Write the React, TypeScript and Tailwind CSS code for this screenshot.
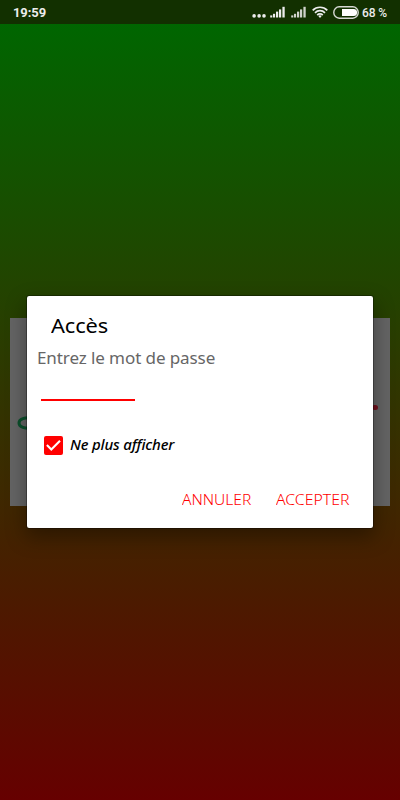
function SignalBars({ className }: { className?: string }) {
  return (
    <svg viewBox="0 0 16 12" className={className} fill="currentColor">
      <rect x="0.2" y="9.4" width="2.1" height="2.1" />
      <rect x="3" y="7.8" width="2.1" height="3.7" />
      <rect x="6" y="5.6" width="2.2" height="5.9" />
      <rect x="9" y="3.4" width="2.2" height="8.1" />
      <rect x="12.4" y="0.8" width="2.3" height="10.7" />
    </svg>
  );
}

function WifiIcon() {
  return (
    <svg viewBox="0 0 16 12" className="ml-[5px] h-3 w-4" fill="none" stroke="currentColor" strokeWidth="1.7">
      <path d="M0.7 4.3a10.3 10.3 0 0 1 14.6 0" />
      <path d="M3 6.8a7 7 0 0 1 10 0" />
      <path d="M5.2 9.1a4 4 0 0 1 5.6 0" />
      <path d="M6.3 10.1 8 11.9l1.7-1.8a2.4 2.4 0 0 0-3.4 0z" fill="currentColor" stroke="none" />
    </svg>
  );
}

function StatusBar() {
  return (
    <header className="flex h-6 items-center bg-[#123000] px-[13px] font-['Roboto',sans-serif] text-[#ececec]">
      <time className="pt-px text-[13px] font-bold leading-6 tracking-[-0.1px]">19:59</time>
      <div className="ml-auto flex items-center">
        <svg viewBox="0 0 14 4" className="mt-[7px] h-1 w-3.5" fill="currentColor">
          <circle cx="2.1" cy="1.9" r="1.8" />
          <circle cx="7.1" cy="1.9" r="1.8" />
          <circle cx="12" cy="1.9" r="1.8" />
        </svg>
        <SignalBars className="ml-1 h-3 w-4" />
        <SignalBars className="ml-[5px] h-3 w-4 text-[#cfd3cb]" />
        <WifiIcon />
        <svg viewBox="0 0 26 13" className="ml-[5px] h-[13px] w-[26px]">
          <rect x="0.8" y="0.8" width="24.4" height="11.4" rx="5.4" fill="none" stroke="#d6d8d3" strokeWidth="1.4" />
          <path d="M9 3h11.6a3.5 3.5 0 0 1 0 7H9z" fill="#fff" />
        </svg>
        <span className="ml-[3px] w-[25px] whitespace-nowrap pt-px text-xs font-medium leading-6 tracking-[-0.1px]">68 %</span>
      </div>
    </header>
  );
}

function AccessDialog() {
  return (
    <div
      role="dialog"
      className="absolute left-[26px] top-[271px] flex h-[234px] w-[348px] flex-col rounded-[3px] border border-black/30 bg-white bg-clip-padding font-['Noto_Sans','Open_Sans',sans-serif] shadow-[0_8px_20px_rgba(0,0,0,0.35)]"
    >
      <h2 className="ml-6 mt-4 h-7 origin-left scale-x-[1.09] whitespace-nowrap text-[20px] leading-7 tracking-[-0.1px] text-black">
        Accès
      </h2>
      <p className="ml-[10px] mt-1.5 h-6 origin-left scale-x-[1.1] whitespace-nowrap text-[15.5px] leading-6 tracking-[-0.1px] text-[#666]">
        Entrez le mot de passe
      </p>
      <div className="ml-3.5 mt-[29px] h-0.5 w-[94px] bg-[#ff0000]" />
      <label className="ml-[17px] mt-8 flex h-6 items-center">
        <span className="flex size-[19px] items-center justify-center rounded-[2px] bg-[#ff0000]">
          <svg viewBox="0 0 19 19" className="size-[19px]" fill="none" stroke="#fff" strokeWidth="2.1">
            <path d="M2.9 9.1 7.3 13.5 16 4.8" />
          </svg>
        </span>
        <span className="ml-[7px] origin-left scale-x-[1.07] whitespace-nowrap text-[14px] font-medium italic leading-6 tracking-[-0.15px] text-black">
          Ne plus afficher
        </span>
      </label>
      <div className="mr-[23px] mt-[31px] flex h-6 justify-end gap-6 text-[14px] leading-6 text-[#ff0000]">
        <button className="w-[70px] origin-left scale-x-[1.11] whitespace-nowrap text-left font-light">ANNULER</button>
        <button className="w-[74px] origin-left scale-x-[1.13] whitespace-nowrap text-left font-light">ACCEPTER</button>
      </div>
    </div>
  );
}

export default function App() {
  return (
    <div className="flex h-[800px] w-[400px] flex-col overflow-hidden">
      <StatusBar />
      <main className="relative flex-1 bg-linear-to-b/srgb from-[#006600] to-[#660000] px-[10px] pt-[294px]">
        <div className="flex h-[188px] items-start justify-between bg-[#646464]">
          <svg viewBox="0 0 20 18" className="ml-[7px] mt-[96px] h-[18px] w-5">
            <path d="M15 4C8 3 2 5 2 9s6 6 13 5" fill="none" stroke="#0b4f2b" strokeWidth="3" />
          </svg>
          <span className="mr-[12px] mt-[87px] h-[5px] w-1.5 rounded-full bg-[#70101c]" />
        </div>
        <AccessDialog />
      </main>
    </div>
  );
}
